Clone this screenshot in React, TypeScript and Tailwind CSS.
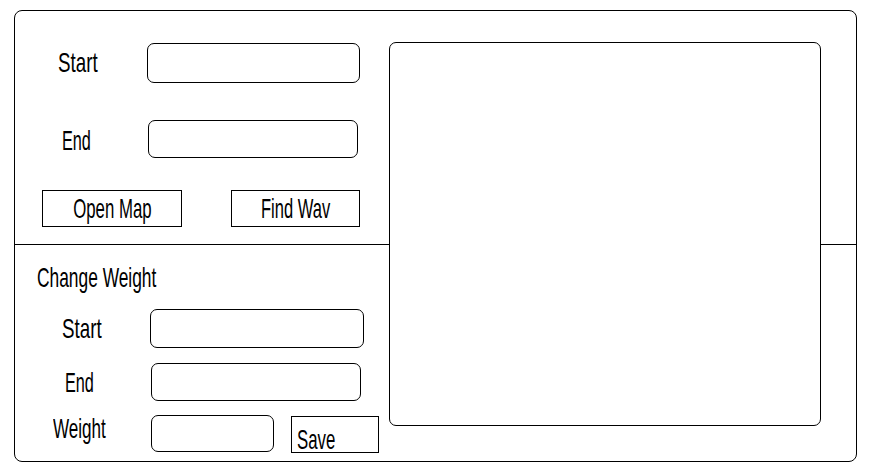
const font = { fontFamily: '"Liberation Sans", Arial, sans-serif' };

function Label({ text, scale = 'scale-x-[0.61]' }: { text: string; scale?: string }) {
  return (
    <span className={`inline-block origin-left whitespace-nowrap text-[28px] leading-[28px] text-black ${scale}`}>
      {text}
    </span>
  );
}

export default function App() {
  return (
    <div className="w-[873px] h-[476px] bg-white pt-[10px] pl-[14px]" style={font}>
      <div className="flex w-[843px] h-[452px] border border-black rounded-[8px]">
        {/* left column */}
        <div className="flex flex-col w-[374px]">
          {/* find way */}
          <div className="h-[234px] border-b border-black">
            <div className="flex items-center mt-[32px]">
              <div className="flex ml-[43px] w-[89px]">
                <Label text="Start" scale="scale-x-[0.67]" />
              </div>
              <div className="w-[213px] h-[40px] border border-black rounded-[7px]"></div>
            </div>
            <div className="flex items-center mt-[37px]">
              <div className="flex ml-[47px] w-[86px] pt-[3px]">
                <Label text="End" scale="scale-x-[0.58]" />
              </div>
              <div className="w-[210px] h-[38px] border border-black rounded-[7px]"></div>
            </div>
            <div className="flex mt-[32px]">
              <button className="ml-[27px] w-[140px] h-[37px] border border-black flex items-center justify-center">
                <span className="inline-block whitespace-nowrap text-[28px] leading-[28px] scale-x-[0.6]">Open Map</span>
              </button>
              <button className="ml-[49px] w-[129px] h-[37px] border border-black flex items-center justify-center">
                <span className="inline-block whitespace-nowrap text-[28px] leading-[28px] scale-x-[0.59]">Find Wav</span>
              </button>
            </div>
          </div>

          {/* change weight */}
          <div className="flex-1">
            <div className="flex ml-[22px] mt-[19px]">
              <Label text="Change Weight" scale="scale-x-[0.62]" />
            </div>
            <div className="flex items-center mt-[17px]">
              <div className="flex ml-[47px] w-[88px]">
                <Label text="Start" scale="scale-x-[0.67]" />
              </div>
              <div className="w-[214px] h-[39px] border border-black rounded-[7px]"></div>
            </div>
            <div className="flex items-center mt-[15px]">
              <div className="flex ml-[50px] w-[86px] pt-[2px]">
                <Label text="End" scale="scale-x-[0.58]" />
              </div>
              <div className="w-[210px] h-[38px] border border-black rounded-[7px]"></div>
            </div>
            <div className="flex items-start mt-[14px]">
              <div className="flex ml-[38px] w-[98px]">
                <Label text="Weight" scale="scale-x-[0.61]" />
              </div>
              <div className="w-[123px] h-[37px] border border-black rounded-[7px]"></div>
              <button className="flex ml-[17px] mt-[1px] w-[88px] h-[37px] border border-black pl-[5px] pt-[9px]">
                <Label text="Save" scale="scale-x-[0.6]" />
              </button>
            </div>
          </div>
        </div>

        {/* map panel */}
        <div className="self-start mt-[31px] w-[432px] h-[384px] border border-black rounded-[7px]"></div>

        {/* right strip with divider */}
        <div className="flex-1">
          <div className="h-[234px] border-b border-black"></div>
        </div>
      </div>
    </div>
  );
}
